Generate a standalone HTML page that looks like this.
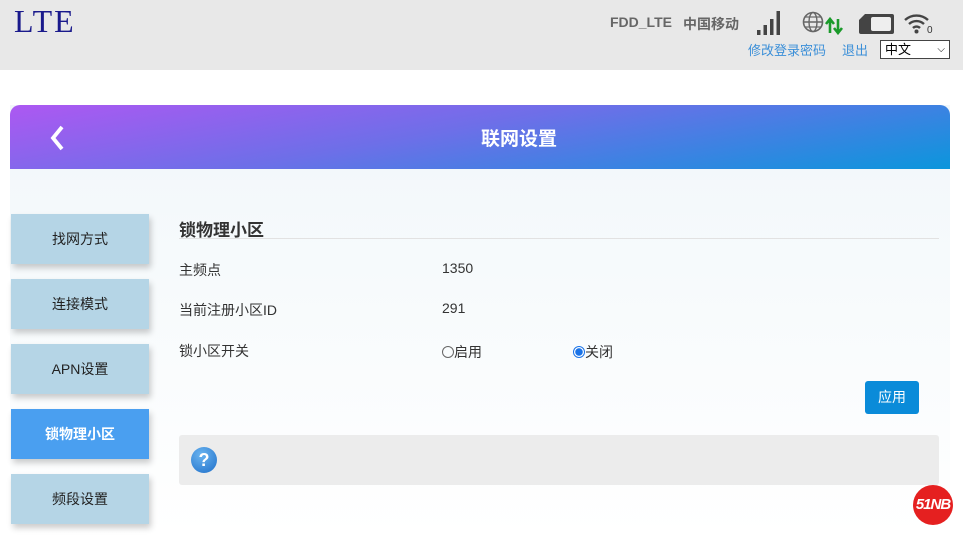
<!DOCTYPE html>
<html><head><meta charset="utf-8"><style>
*{margin:0;padding:0;box-sizing:border-box}
body{width:963px;height:535px;overflow:hidden;background:#fff;font-family:"Liberation Sans","Noto Sans CJK SC",sans-serif;position:relative;color:#333}
.hdr{position:absolute;left:0;top:0;width:963px;height:70px;background:#e8e8e8}
.logo{position:absolute;left:14px;top:3px;font-family:"Liberation Serif",serif;font-size:32px;color:#1a1a8c;letter-spacing:2px}
.st{position:absolute;top:14px;font-size:14px;font-weight:bold;color:#666}
.lk{position:absolute;top:40px;font-size:13px;color:#3b8fd8}
.sel{position:absolute;left:880px;top:40px;width:70px;height:19px;border:1px solid #444;background:#fff;font-size:13px;padding-left:4px;color:#000;line-height:17px}
.card{position:absolute;left:10px;top:105px;width:940px;height:430px;background:linear-gradient(#f1f7fa,#fff)}
.ch{position:absolute;left:10px;top:105px;width:940px;height:64px;border-radius:10px 10px 0 0;background:linear-gradient(170deg,#ad58f2 0%,#6d6fe8 45%,#0b96dc 100%)}
.ch .t{position:absolute;left:78px;right:0;top:19px;text-align:center;color:#fff;font-size:19px;font-weight:bold}
.nav{position:absolute;left:11px;width:138px;height:50px;background:#b5d5e6;font-size:14px;color:#222;text-align:center;line-height:50px;box-shadow:2px 4px 6px rgba(0,0,0,.2)}
.nav.a{background:#4a9ff0;color:#fff;font-weight:bold}
.lb{position:absolute;left:179px;font-size:14px;color:#333}
.v{position:absolute;left:442px;font-size:14px;color:#333}
</style></head><body>
<div class="hdr"></div>
<div class="logo">LTE</div>
<div class="st" style="left:610px">FDD_LTE</div>
<div class="st" style="left:683px">中国移动</div>
<svg style="position:absolute;left:756px;top:10px" width="28" height="26"><rect x="1" y="20" width="3.5" height="5" fill="#444"/><rect x="7.5" y="15" width="3.5" height="10" fill="#444"/><rect x="14" y="9" width="3.5" height="16" fill="#444"/><rect x="20.5" y="1" width="3.5" height="24" fill="#444"/></svg>
<svg style="position:absolute;left:802px;top:11px" width="44" height="24"><circle cx="11" cy="11" r="9.5" fill="none" stroke="#666" stroke-width="1.6"/><ellipse cx="11" cy="11" rx="4" ry="9.5" fill="none" stroke="#666" stroke-width="1.4"/><line x1="1.5" y1="11" x2="20.5" y2="11" stroke="#666" stroke-width="1.4"/><line x1="3" y1="6" x2="19" y2="6" stroke="#666" stroke-width="1.2"/><line x1="3" y1="16" x2="19" y2="16" stroke="#666" stroke-width="1.2"/><path d="M28 22V9M24 13l4-5 4 5M36 8v13M32 17l4 5 4-5" stroke="#1a9a2a" stroke-width="2.6" fill="none"/></svg>
<svg style="position:absolute;left:858px;top:13px" width="38" height="22"><path d="M7 1H34a2 2 0 0 1 2 2V19a2 2 0 0 1-2 2H3a2 2 0 0 1-2-2V7z" fill="#444"/><rect x="13" y="4" width="20" height="14" rx="2" fill="#eee"/></svg>
<svg style="position:absolute;left:903px;top:12px" width="32" height="22"><path d="M2 8a17 17 0 0 1 23 0M6 12a11 11 0 0 1 15 0M10 16a5 5 0 0 1 7 0" stroke="#444" stroke-width="2.4" fill="none"/><circle cx="13.5" cy="19.5" r="2" fill="#444"/><text x="24" y="21" font-size="10" fill="#333" font-family="Liberation Sans">0</text></svg>
<div class="lk" style="left:748px">修改登录密码</div>
<div class="lk" style="left:842px">退出</div>
<div class="sel">中文<span style="position:absolute;right:4px;top:0;font-size:10px">&#x2335;</span></div>
<div class="card"></div>
<div class="ch"><svg style="position:absolute;left:38px;top:19px" width="20" height="28"><path d="M14 3L5 14l9 11" stroke="#fff" stroke-width="3.8" fill="none"/></svg><div class="t">联网设置</div></div>
<div class="nav" style="top:214px">找网方式</div>
<div class="nav" style="top:279px">连接模式</div>
<div class="nav" style="top:344px">APN设置</div>
<div class="nav a" style="top:409px">锁物理小区</div>
<div class="nav" style="top:474px">频段设置</div>
<div style="position:absolute;left:179px;top:216px;font-size:17px;font-weight:bold;color:#333">锁物理小区</div>
<div style="position:absolute;left:179px;top:238px;width:760px;height:1px;background:#e2e2e2"></div>
<div class="lb" style="top:260px">主频点</div><div class="v" style="top:260px">1350</div>
<div class="lb" style="top:300px">当前注册小区ID</div><div class="v" style="top:300px">291</div>
<div class="lb" style="top:341px">锁小区开关</div>
<div class="v" style="top:342px"><span style="display:inline-block;width:12px;height:12px;border:1px solid #666;border-radius:50%;vertical-align:-1px"></span>启用</div>
<div class="v" style="top:342px;left:573px"><span style="display:inline-block;width:12px;height:12px;border:1px solid #1a73e8;border-radius:50%;vertical-align:-1px;background:radial-gradient(#1a73e8 3.5px,#fff 4px)"></span>关闭</div>
<div style="position:absolute;left:865px;top:381px;width:54px;height:33px;background:#0a8bd9;border-radius:3px;color:#fff;font-size:14px;text-align:center;line-height:33px">应用</div>
<div style="position:absolute;left:179px;top:435px;width:760px;height:50px;background:#ececec;border-radius:3px"></div>
<div style="position:absolute;left:191px;top:447px;width:26px;height:26px;border-radius:50%;background:radial-gradient(circle at 40% 30%,#6ab4f0,#1f6fc9);color:#fff;font-weight:bold;font-size:18px;text-align:center;line-height:26px">?</div>
<div style="position:absolute;left:913px;top:485px;width:40px;height:40px;border-radius:50%;background:#e52020;color:#fff;font-weight:bold;font-style:italic;font-size:15px;text-align:center;line-height:40px;letter-spacing:-1px">51NB</div>
</body></html>
